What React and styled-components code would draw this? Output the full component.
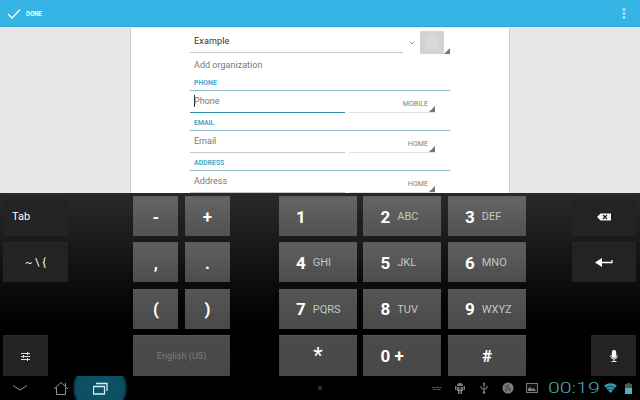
import React from 'react';
import styled, { createGlobalStyle } from 'styled-components';

const Global = createGlobalStyle`
  * { box-sizing: border-box; }
  body { margin: 0; overflow: hidden; background: #000; font-family: Roboto, "Liberation Sans", sans-serif; }
  svg { display: block; flex: none; }
`;

const Screen = styled.div`
  width: 640px;
  height: 400px;
  display: flex;
  flex-direction: column;
`;

const ActionBar = styled.header`
  height: 27px;
  flex: none;
  display: flex;
  align-items: center;
  padding: 1px 14px 0 7px;
  background: #35b4e5;
  border-bottom: 1px solid #2fa5d3;
  color: #effaff;
`;

const DoneLabel = styled.span`
  margin-left: 5px;
  font-size: 6.3px;
  font-weight: 700;
  line-height: 10px;
  letter-spacing: -0.2px;
  flex: 1;
`;

const Page = styled.main`
  height: 166px;
  flex: none;
  overflow: hidden;
  display: flex;
  justify-content: center;
  background: #e6e6e6;
  border-top: 1px solid #d9f1fa;
`;

const Sheet = styled.section`
  width: 380px;
  padding: 0 59px;
  background: #fff;
  border: solid #cdcdcd;
  border-width: 0 1px;
`;

const NameRow = styled.div`
  height: 27px;
  display: flex;
  align-items: flex-start;
`;

const Field = styled.div`
  width: ${(p) => p.$width}px;
  height: ${(p) => p.$height}px;
  padding: ${(p) => (p.$filled ? '2px 0 0 4px' : '0 0 2px 4px')};
  display: flex;
  align-items: center;
  font-size: 9px;
  letter-spacing: ${(p) => (p.$filled ? 0.15 : 0)}px;
  color: ${(p) => (p.$filled ? '#333' : '#777')};
  border-bottom: 1px solid ${(p) => (p.$focused ? '#2f8ba8' : '#c4c8c9')};
`;

const Caret = styled.i`
  width: 1px;
  height: 12px;
  margin-right: -1px;
  background: #333;
`;

const Chevron = styled.div`
  padding: 13px 5px 0 6px;
`;

const Photo = styled.div`
  width: 24px;
  height: 23px;
  margin-top: 3px;
  background: #d5d5d5;
`;

const Corner = styled.i`
  width: 6px;
  height: 6px;
  flex: none;
  background: #777;
  clip-path: polygon(100% 0, 100% 100%, 0 100%);
`;

const PhotoCorner = styled(Corner)`
  margin-top: 20px;
`;

const AddOrganization = styled.div`
  height: 20px;
  padding-left: 4px;
  font-size: 9px;
  line-height: 20px;
  letter-spacing: 0.02px;
  color: #777;
`;

const SectionTitle = styled.h2`
  height: ${(p) => p.$height}px;
  margin: 0;
  padding: 0 0 3px 4px;
  display: flex;
  align-items: flex-end;
  font-size: 6.9px;
  line-height: 8px;
  font-weight: 700;
  color: #43a9ca;
  border-bottom: 1px solid #8dbccc;
`;

const EntryRow = styled.div`
  display: flex;
  gap: 4px;
`;

const TypePicker = styled.div`
  width: 86px;
  height: 22px;
  display: flex;
  align-items: flex-end;
  justify-content: flex-end;
  border-bottom: 1px solid #dfe2e3;
`;

const TypeLabel = styled.span`
  padding: 0 1px 4px 0;
  font-size: 7.1px;
  line-height: 9px;
  color: #7d7d7d;
`;

const Keyboard = styled.section`
  height: 183px;
  flex: none;
  display: flex;
  padding: 3px 4px 0 3px;
  background: linear-gradient(#292929 0%, #181818 30%, #060606 60%, #000 75%);
`;

const KeyColumn = styled.div`
  width: ${(p) => p.$width}px;
  margin-left: ${(p) => (p.$end ? 'auto' : 0)};
  display: flex;
  flex-direction: column;
  align-items: ${(p) => (p.$end ? 'flex-end' : 'stretch')};
  justify-content: space-between;
`;

const KeyStack = styled.div`
  width: 100%;
  display: grid;
  gap: 6px;
`;

const KeyGrid = styled.div`
  display: grid;
  grid-template-columns: ${(p) => p.$columns};
  grid-template-rows: 40px 40px 40px 41px;
  row-gap: 6px;
  column-gap: ${(p) => p.$gap}px;
  margin-left: ${(p) => p.$offset}px;
  align-content: space-between;
  height: 180px;
`;

const tones = ['#646464, #525252', '#5f5f5f, #4d4d4d', '#555, #494949', '#4b4b4b, #484848'];

const Key = styled.div`
  height: ${(p) => (p.$row === 3 ? 41 : 40)}px;
  display: flex;
  align-items: center;
  background: linear-gradient(${(p) => tones[p.$row]});
  border-top: 1px solid rgba(255, 255, 255, 0.08);
  color: #fff;
`;

const SymbolKey = styled(Key)`
  justify-content: center;
  font-size: ${(p) => p.$size || 17}px;
  font-weight: ${(p) => p.$weight || 700};
`;

const LanguageKey = styled(Key)`
  grid-column: span 2;
  justify-content: center;
  font-size: 9.2px;
  color: #7c7c7c;
`;

const DigitKey = styled(Key)`
  padding-left: 17px;
  gap: 7px;
  font-size: 17px;
  font-weight: 700;
`;

const Letters = styled.span`
  font-size: 11px;
  font-weight: 400;
  color: #c5c5c5;
`;

const FunctionKey = styled.div`
  width: ${(p) => (p.$width ? `${p.$width}px` : '100%')};
  height: ${(p) => (p.$width ? 41 : 40)}px;
  display: flex;
  align-items: center;
  justify-content: ${(p) => (p.$start ? 'flex-start' : 'center')};
  padding-left: ${(p) => (p.$start ? 9 : 0)}px;
  background: #232323;
  border-top: 1px solid #272727;
  font-size: 11px;
  color: #fff;
`;

const SystemBar = styled.footer`
  height: 24px;
  flex: none;
  display: flex;
  align-items: center;
  background: #000;
`;

const NavButton = styled.div`
  width: ${(p) => p.$width}px;
  height: 24px;
  padding-left: ${(p) => p.$indent || 0}px;
  display: flex;
  align-items: center;
  justify-content: center;
  background: ${(p) => (p.$active ? 'radial-gradient(circle 28px at 50% 50%, #0e5368 0%, #0d4d61 88%, rgba(7, 49, 63, .6) 95%, transparent 100%)' : 'none')};
`;

const MenuDot = styled.i`
  width: 4px;
  height: 4px;
  margin-left: 190px;
  border-radius: 50%;
  background: #343434;
`;

const Status = styled.div`
  margin-left: auto;
  padding-right: 1px;
  display: flex;
  align-items: center;
`;

const StatusIcon = styled.div`
  width: ${(p) => p.$width}px;
  display: flex;
  justify-content: center;
`;

const ClockBox = styled.div`
  width: 58px;
  height: 24px;
  padding-left: 3px;
`;

const Clock = styled.span`
  display: block;
  width: max-content;
  font-size: 14px;
  line-height: 25px;
  font-weight: 300;
  color: #4ea3be;
  transform: scaleX(1.52);
  transform-origin: left;
`;

const sections = [
  { title: 'PHONE', label: 'Phone', type: 'MOBILE', focused: true, height: 16 },
  { title: 'EMAIL', label: 'Email', type: 'HOME', height: 18 },
  { title: 'ADDRESS', label: 'Address', type: 'HOME', height: 18 },
];

const symbols = ['-', '+', ',', '.', '(', ')'];
const digits = [
  ['1', ''], ['2', 'ABC'], ['3', 'DEF'],
  ['4', 'GHI'], ['5', 'JKL'], ['6', 'MNO'],
  ['7', 'PQRS'], ['8', 'TUV'], ['9', 'WXYZ'],
];

export default function App() {
  return (
    <Screen>
      <Global />
      <ActionBar>
        <svg width="14" height="12" viewBox="0 0 14 12"><path d="M1 6l4 4 8-8.5" fill="none" stroke="#effaff" strokeWidth="1.5" /></svg>
        <DoneLabel>DONE</DoneLabel>
        <svg width="4" height="13" viewBox="0 0 4 13" fill="#a4e6fc"><circle cx="2" cy="2.5" r="1.5" /><circle cx="2" cy="6.5" r="1.5" /><circle cx="2" cy="10.5" r="1.5" /></svg>
      </ActionBar>

      <Page>
        <Sheet>
          <NameRow>
            <Field $width={213} $height={25} $filled>Example</Field>
            <Chevron><svg width="6" height="4" viewBox="0 0 6 4"><path d="M.5.5L3 3 5.500.5" fill="none" stroke="#999" /></svg></Chevron>
            <Photo>
              <svg width="24" height="23" viewBox="0 0 24 23"><rect x="1" y="1" width="22" height="21" fill="#d2d2d2" /><circle cx="12" cy="10" r="6" fill="#dadada" /><path d="M4 20q2-7 8-6 7-1 9 6" fill="#d8d8d8" /><path d="M8 10l4-3 4 3M9 14h6" fill="none" stroke="#d0d0d0" /></svg>
            </Photo>
            <PhotoCorner />
          </NameRow>
          <AddOrganization>Add organization</AddOrganization>
          {sections.map((s) => (
            <React.Fragment key={s.title}>
              <SectionTitle $height={s.height}>{s.title}</SectionTitle>
              <EntryRow>
                <Field $width={155} $height={22} $focused={s.focused}>{s.focused && <Caret />}{s.label}</Field>
                <TypePicker><TypeLabel>{s.type}</TypeLabel><Corner /></TypePicker>
              </EntryRow>
            </React.Fragment>
          ))}
        </Sheet>
      </Page>

      <Keyboard>
        <KeyColumn $width={65}>
          <KeyStack>
            <FunctionKey $start>Tab</FunctionKey>
            <FunctionKey>~ \ {'{'}</FunctionKey>
          </KeyStack>
          <FunctionKey $width={45}>
            <svg width="9" height="9" viewBox="0 0 9 9"><path d="M0 1.5h9M0 4.5h9M0 7.5h9M6.5 0v3M2.500 3v3M6.500 6v3" fill="none" stroke="#ddd" /></svg>
          </FunctionKey>
        </KeyColumn>

        <KeyGrid $columns="45px 45px" $gap={6.5} $offset={65.4}>
          {symbols.map((s, i) => <SymbolKey key={s} $row={Math.floor(i / 2)}>{s}</SymbolKey>)}
          <LanguageKey $row={3}>English (US)</LanguageKey>
        </KeyGrid>

        <KeyGrid $columns="78px 78px 78px" $gap={6.5} $offset={49.1}>
          {digits.map(([n, letters], i) => (
            <DigitKey key={n} $row={Math.floor(i / 3)}>{n}{letters && <Letters>{letters}</Letters>}</DigitKey>
          ))}
          <SymbolKey $row={3} $size={22} $weight={400}>*</SymbolKey>
          <DigitKey $row={3}>0 +</DigitKey>
          <SymbolKey $row={3}>#</SymbolKey>
        </KeyGrid>

        <KeyColumn $width={64} $end>
          <KeyStack>
            <FunctionKey>
              <svg width="14" height="8" viewBox="0 0 14 8"><path d="M0 4l3.500-3.500H14v7H3.500z" fill="#f4f4f4" /><path d="M6 2l4 4M10 2L6 6" stroke="#222" strokeWidth="1.2" /></svg>
            </FunctionKey>
            <FunctionKey>
              <svg width="18" height="9" viewBox="0 0 18 9"><path d="M0 4.500L7 0v9z" fill="#fff" /><path d="M6 4.500h11V2" fill="none" stroke="#fff" strokeWidth="1.300" /></svg>
            </FunctionKey>
          </KeyStack>
          <FunctionKey $width={45}>
            <svg width="8" height="12" viewBox="0 0 8 12"><rect x="1.800" y="0" width="4.400" height="8" rx="2" fill="#fff" /><path d="M1 5v1.500q0 2.500 3 2.500t3-2.500V5M4 9v2.500M1.500 11.500h5" fill="none" stroke="#eee" /></svg>
          </FunctionKey>
        </KeyColumn>
      </Keyboard>

      <SystemBar>
        <NavButton $width={40}><svg width="16" height="8" viewBox="0 0 16 8"><path d="M1 1.500l7 4.500 7-4.500" fill="none" stroke="#929292" /></svg></NavButton>
        <NavButton $width={32} $indent={9}>
          <svg width="16" height="15" viewBox="0 0 16 15"><path d="M1 8L8 1.500 15 8M3.500 6.500v7h9v-7M12.500 5V2" fill="none" stroke="#929292" /></svg>
        </NavButton>
        <NavButton $width={56} $active>
          <svg width="15" height="13" viewBox="0 0 15 13"><path d="M.5 4.500h11v7.500H.5zM3 1.500h11V9" fill="none" stroke="#cceef6" strokeWidth="1.300" /></svg>
        </NavButton>
        <MenuDot />
        <Status>
          <StatusIcon $width={24}><svg width="10" height="5" viewBox="0 0 10 5"><path d="M0 1.500h10M1 3.500h8" stroke="#606060" strokeDasharray="2 .5" /></svg></StatusIcon>
          <StatusIcon $width={22}><svg width="10" height="12" viewBox="0 0 10 12" fill="#808080"><path d="M2 4q0-3 3-3t3 3zM2 5h6v4H2zM0 4h1.400v4H0zM8.600 4H10v4H8.600zM3 9h1.500v3H3zM5.500 9H7v3H5.500z" /><circle cx="5" cy="6.500" r="1.300" fill="#222" /></svg></StatusIcon>
          <StatusIcon $width={26}><svg width="8" height="12" viewBox="0 0 8 12"><path d="M4 2v8M1 4v2l3 2M7 3.500V6L4 7.500" fill="none" stroke="#808080" /><path d="M2.500 2.500L4 0l1.500 2.500z" fill="#808080" /><circle cx="4" cy="10.500" r="1.300" fill="#808080" /></svg></StatusIcon>
          <StatusIcon $width={22}><svg width="12" height="12" viewBox="0 0 12 12"><circle cx="6" cy="6" r="5.500" fill="#808080" /><path d="M3 3l2 4 4 2M6 2v3l3 2M3 7l2 3" fill="none" stroke="#383838" /></svg></StatusIcon>
          <StatusIcon $width={26}><svg width="12" height="10" viewBox="0 0 12 10"><rect x=".5" y=".5" width="11" height="9" fill="#111" stroke="#777" /><path d="M2 8V6l2-2 2 2 2-1 2 3z" fill="#808080" /></svg></StatusIcon>
          <ClockBox><Clock>00:19</Clock></ClockBox>
          <StatusIcon $width={14}><svg width="13" height="10" viewBox="0 0 13 10"><path d="M0 2.500Q6.500-2 13 2.500L6.500 10z" fill="#3b9ab4" /><path d="M2 4.500q4.500-3 9 0M4 6.700q2.500-2 5 0" fill="none" stroke="#123f4c" /></svg></StatusIcon>
          <StatusIcon $width={22}><svg width="7" height="11" viewBox="0 0 7 11"><path d="M2 0h3v1h2v10H0V1h2z" fill="#555" /><path d="M0 5h7v6H0z" fill="#53adc5" /></svg></StatusIcon>
        </Status>
      </SystemBar>
    </Screen>
  );
}
